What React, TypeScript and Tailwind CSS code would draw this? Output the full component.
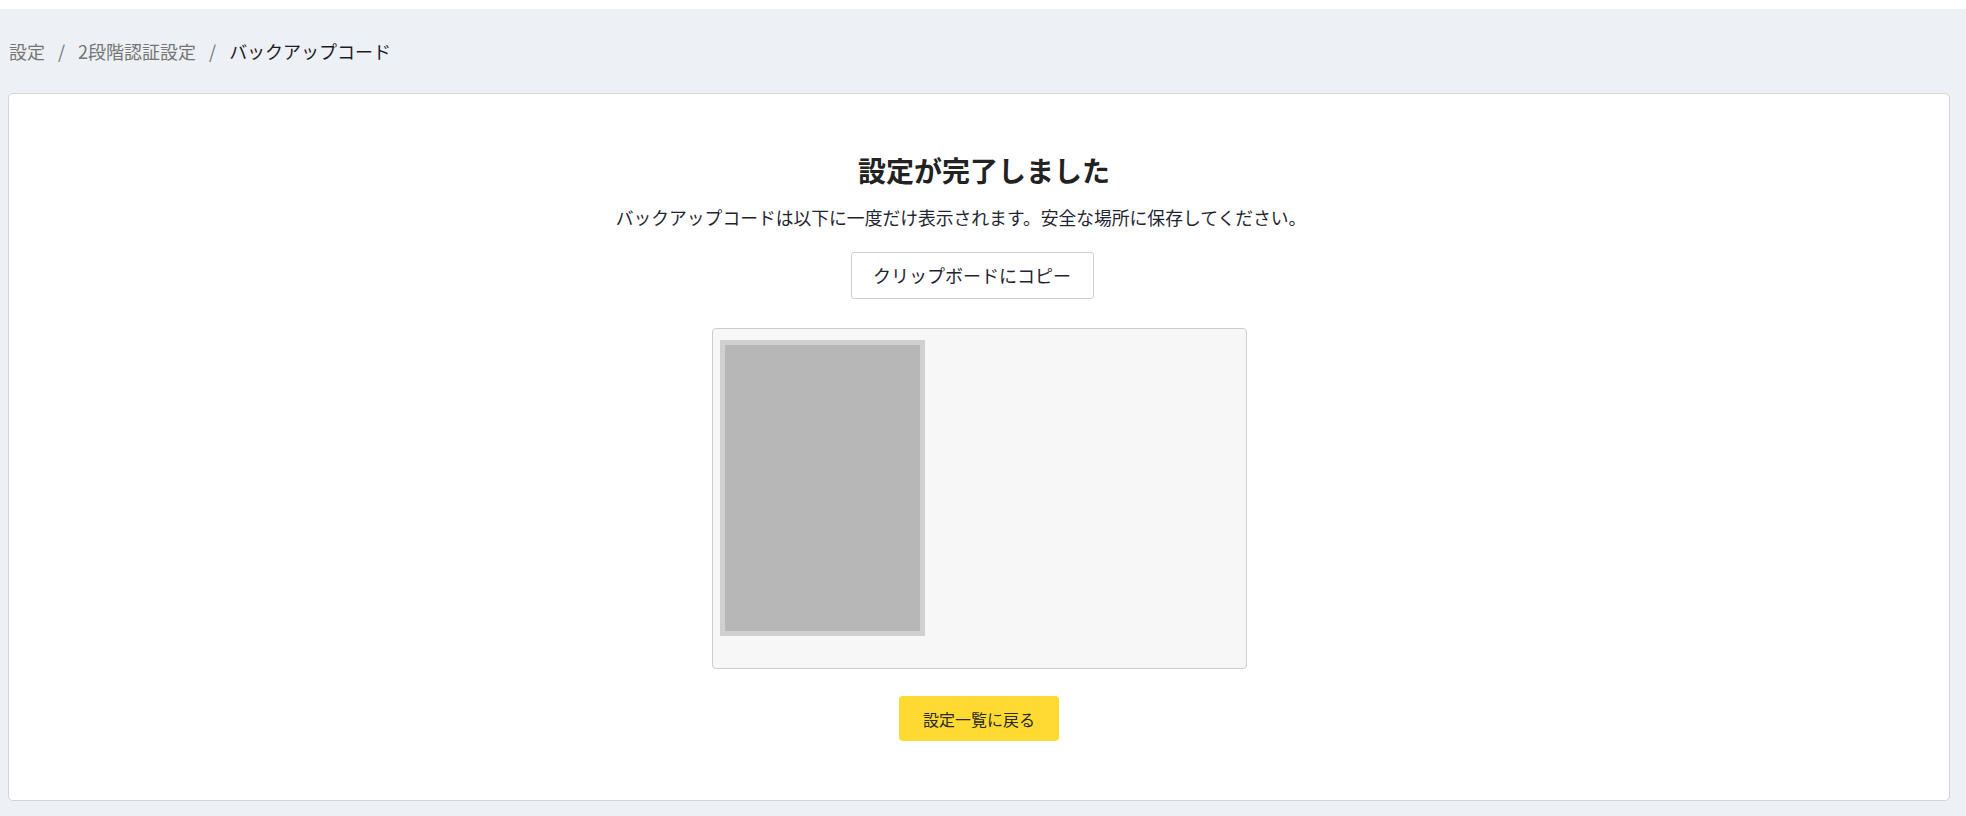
export default function App() {
  return (
    <div className="min-h-[816px] w-full bg-white font-['Noto_Sans_CJK_JP',sans-serif]">
      <div className="mt-[9px] bg-[#edf0f4] pl-[8px] pr-[16px] pb-[16px]">
        {/* Breadcrumb */}
        <nav className="flex items-center py-[28px] pl-[1px] text-[18px] leading-[28px]">
          <span className="text-[#767676]">設定</span>
          <span className="mx-[13px] text-[#767676]">/</span>
          <span className="text-[#767676]">2段階認証設定</span>
          <span className="mx-[13px] text-[#767676]">/</span>
          <span className="text-[#1c1c28]">バックアップコード</span>
        </nav>

        {/* Card */}
        <div className="flex flex-col items-center rounded-[5px] border border-[#d4d4d4] bg-white pt-[58px] pb-[59px]">
          <h1 className="ml-[10px] text-[28px] font-bold leading-[36px] text-[#222]">
            設定が完了しました
          </h1>
          <p className="mt-[16px] pr-[36px] text-[17.8px] leading-[27px] text-[#1f2433]">
            バックアップコードは以下に一度だけ表示されます。安全な場所に保存してください。
          </p>
          <button className="mt-[21px] mr-[14px] flex h-[47px] w-[243px] items-center justify-center rounded-[3px] border border-[#cfcfcf] bg-white text-[18px] text-[#1f2433]">
            クリップボードにコピー
          </button>

          {/* Backup codes (obscured) */}
          <div className="mt-[29px] h-[341px] w-[535px] rounded-[4px] border border-[#cdcdcd] bg-[#f7f7f7] pt-[11px] pl-[7px]">
            <div className="h-[296px] w-[205px] border-[5px] border-[#d0d0d0] bg-[#b7b7b7]" />
          </div>

          <button className="mt-[27px] flex h-[45px] w-[160px] items-center justify-center rounded-[4px] bg-[#ffda33] text-[16px] text-[#2a2a2a]">
            設定一覧に戻る
          </button>
        </div>
      </div>
    </div>
  );
}
